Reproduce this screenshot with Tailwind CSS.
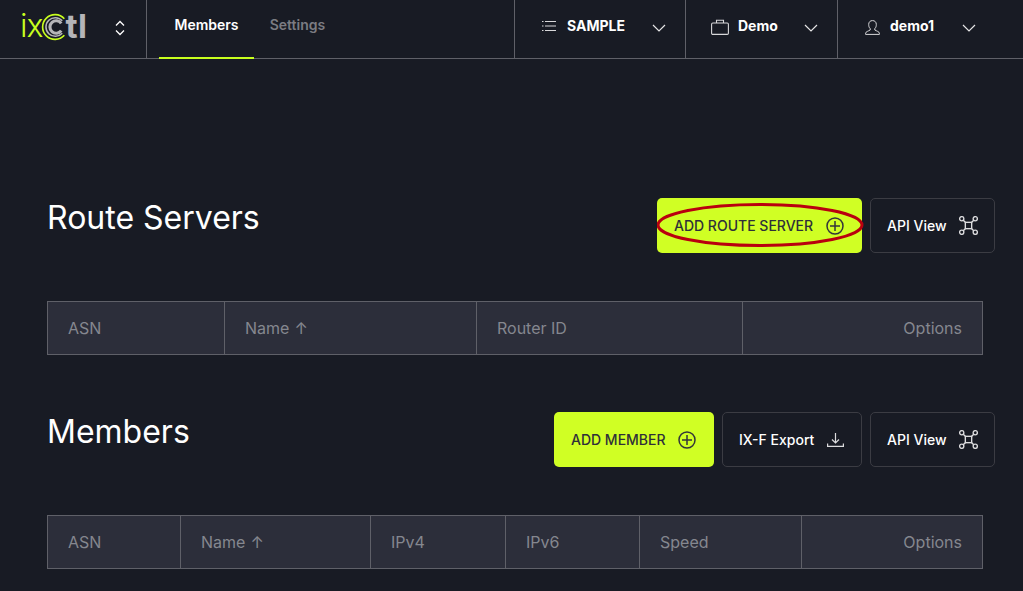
<!DOCTYPE html>
<html>
<head>
<meta charset="utf-8">
<script src="https://cdn.jsdelivr.net/npm/@tailwindcss/browser@4"></script>
</head>
<body class="bg-[#181b24] font-['Inter',sans-serif] text-white w-[1023px] h-[591px] overflow-hidden">
<header class="flex h-[59px] border-b border-[#5f6068]">
  <div class="w-[147px] shrink-0 border-r border-[#5f6068] flex items-center pl-[20px] relative">
    <span class="text-[32px] leading-none font-light text-[#c8ff1e] tracking-[-1px] -mt-[6px]">ix</span>
    <svg class="w-[28px] h-[28px] -ml-[1px] -mt-[5px]" viewBox="0 0 27 27" fill="none">
      <path d="M22.500 5.500A12 12 0 1 0 22.500 21.500" stroke="#c8ff1e" stroke-width="1.600"/>
      <path d="M20.500 7.500A9 9 0 1 0 20.500 19.500" stroke="#b5b5b8" stroke-width="1.500"/>
      <path d="M19.500 10A6 6 0 1 0 19.500 17" stroke="#b5b5b8" stroke-width="3"/>
    </svg>
    <span class="text-[33px] leading-none font-bold text-[#b5b5b8] tracking-[0.5px] -mt-[6px] -ml-[4px]">tl</span>
    <svg class="w-[12px] h-[18px] ml-[26px] -mt-[3px]" viewBox="0 0 12 18" fill="none" stroke="#fff" stroke-width="1.300"><path d="M2 6.500 6 2.500l4 4M2 11.500l4 4 4-4"/></svg>
  </div>
  <nav class="flex flex-1 pl-[12px] text-sm font-semibold">
    <a class="w-[95px] h-[59px] flex items-center justify-center pb-[8px] border-b-2 border-[#c8ff1e] text-white">Members</a>
    <a class="w-[87px] h-[58px] flex items-center justify-center pb-[8px] text-[#7b7c82]">Settings</a>
  </nav>
  <div class="w-[171px] shrink-0 border-l border-[#5f6068] flex items-center pl-[27px] pb-[6px] text-sm font-bold">
    <svg class="w-[14px] h-[12px] mr-[11px]" viewBox="0 0 14 12" fill="none" stroke="#d8d8da" stroke-width="1"><path d="M3 1.500h11M3 6h11M3 10.500h11M0 1.500h1.500M0 6h1.500M0 10.500h1.500"/></svg>
    <span class="w-[85px]">SAMPLE</span>
    <svg class="w-[14px] h-[8px] mt-[3px]" viewBox="0 0 14 8" fill="none" stroke="#e5e5e6" stroke-width="1.200"><path d="M1 1l6 6 6-6"/></svg>
  </div>
  <div class="w-[152px] shrink-0 border-l border-[#5f6068] flex items-center pl-[25px] pb-[6px] text-sm font-bold">
    <svg class="w-[18px] h-[16px] mr-[9px] mt-[2px]" viewBox="0 0 18 16" fill="none" stroke="#d8d8da" stroke-width="1.100"><rect x=".6" y="4" width="16.800" height="11.400" rx="1.200"/><path d="M5.500 4V1.200h7V4"/></svg>
    <span class="w-[66px]">Demo</span>
    <svg class="w-[14px] h-[8px] mt-[3px]" viewBox="0 0 14 8" fill="none" stroke="#e5e5e6" stroke-width="1.200"><path d="M1 1l6 6 6-6"/></svg>
  </div>
  <div class="w-[186px] shrink-0 border-l border-[#5f6068] flex items-center pl-[27px] pb-[6px] text-sm font-bold">
    <svg class="w-[15px] h-[15px] mr-[10px] mt-[2px]" viewBox="0 0 15 15" fill="none" stroke="#d8d8da" stroke-width="1"><path d="M.6 14.400v-1.200c0-1.500 3-2.200 4.600-3.200V8.600C4 7.600 3.700 6 3.700 4.400 3.700 2 5.200.6 7.500.6s3.800 1.400 3.800 3.800c0 1.600-.3 3.200-1.500 4.200V10c1.600 1 4.600 1.700 4.600 3.200v1.200z"/></svg>
    <span class="w-[72px]">demo1</span>
    <svg class="w-[14px] h-[8px] mt-[3px]" viewBox="0 0 14 8" fill="none" stroke="#e5e5e6" stroke-width="1.200"><path d="M1 1l6 6 6-6"/></svg>
  </div>
</header>

<main class="pl-[47px] pr-[40px] pt-[139px]">
  <section>
    <div class="flex items-start justify-between -mr-[12px]">
      <h2 class="text-[32px] leading-[40px]">Route Servers</h2>
      <div class="flex gap-2">
        <div class="relative">
          <button class="h-[55px] w-[205px] rounded-[5px] bg-[#d0ff24] text-[#2f3039] text-sm font-medium flex items-center pl-[17px]">
            ADD ROUTE SERVER
            <svg class="w-[18px] h-[18px] ml-[13px]" viewBox="0 0 18 18" fill="none" stroke="#33363a" stroke-width="1.500"><circle cx="9" cy="9" r="8"/><path d="M9 4v10M4 9h10"/></svg>
          </button>
          <svg class="absolute left-0 top-[5px] w-[207px] h-[44px]" viewBox="0 0 207 44" fill="none"><ellipse cx="103" cy="22" rx="102" ry="20.500" stroke="#b9000f" stroke-width="3"/></svg>
        </div>
        <button class="h-[55px] w-[125px] rounded-[5px] border border-[#3b3c43] text-sm font-medium flex items-center pl-[16px]">
          API View
          <svg class="w-[19px] h-[19px] ml-[12px]" viewBox="0 0 18 18" fill="none" stroke="#dcdcde" stroke-width="1.300"><rect x="6" y="6" width="6" height="6"/><circle cx="2.600" cy="2.600" r="2"/><circle cx="15.400" cy="2.600" r="2"/><circle cx="2.600" cy="15.400" r="2"/><circle cx="15.400" cy="15.400" r="2"/><path d="M4 4l2 2M14 4l-2 2M4 14l2-2M14 14l-2-2"/></svg>
        </button>
      </div>
    </div>
    <div class="mt-[48px] flex h-[54px] border border-[#5f6068] bg-[#2c2e3a] text-base text-[#85878f]">
      <div class="w-[176px] flex items-center pl-[20px]">ASN</div>
      <div class="w-[252px] flex items-center pl-[20px] border-l border-[#5f6068]">Name<span class="ml-[5px]">↑</span></div>
      <div class="w-[266px] flex items-center pl-[20px] border-l border-[#5f6068]">Router ID</div>
      <div class="flex-1 flex items-center justify-end pr-[20px] border-l border-[#5f6068]">Options</div>
    </div>
  </section>

  <section class="mt-[57px]">
    <div class="flex items-start justify-between -mr-[12px]">
      <h2 class="text-[32px] leading-[40px]">Members</h2>
      <div class="flex gap-2">
        <button class="h-[55px] w-[160px] rounded-[5px] bg-[#d0ff24] text-[#2f3039] text-sm font-medium flex items-center pl-[17px]">
          ADD MEMBER
          <svg class="w-[18px] h-[18px] ml-[12px]" viewBox="0 0 18 18" fill="none" stroke="#33363a" stroke-width="1.500"><circle cx="9" cy="9" r="8"/><path d="M9 4v10M4 9h10"/></svg>
        </button>
        <button class="h-[55px] w-[140px] rounded-[5px] border border-[#3b3c43] text-sm font-medium flex items-center pl-[16px]">
          IX-F Export
          <svg class="w-[17px] h-[14px] ml-[13px]" viewBox="0 0 17 14" fill="none" stroke="#dcdcde" stroke-width="1.200"><path d="M8.500 0v9.500M5 6.500l3.500 3.500 3.500-3.500M.6 10.500v2.900h15.800v-2.900"/></svg>
        </button>
        <button class="h-[55px] w-[125px] rounded-[5px] border border-[#3b3c43] text-sm font-medium flex items-center pl-[16px]">
          API View
          <svg class="w-[19px] h-[19px] ml-[12px]" viewBox="0 0 18 18" fill="none" stroke="#dcdcde" stroke-width="1.300"><rect x="6" y="6" width="6" height="6"/><circle cx="2.600" cy="2.600" r="2"/><circle cx="15.400" cy="2.600" r="2"/><circle cx="2.600" cy="15.400" r="2"/><circle cx="15.400" cy="15.400" r="2"/><path d="M4 4l2 2M14 4l-2 2M4 14l2-2M14 14l-2-2"/></svg>
        </button>
      </div>
    </div>
    <div class="mt-[48px] flex h-[54px] border border-[#5f6068] bg-[#2c2e3a] text-base text-[#85878f]">
      <div class="w-[132px] flex items-center pl-[20px]">ASN</div>
      <div class="w-[190px] flex items-center pl-[20px] border-l border-[#5f6068]">Name<span class="ml-[5px]">↑</span></div>
      <div class="w-[135px] flex items-center pl-[20px] border-l border-[#5f6068]">IPv4</div>
      <div class="w-[134px] flex items-center pl-[20px] border-l border-[#5f6068]">IPv6</div>
      <div class="w-[162px] flex items-center pl-[20px] border-l border-[#5f6068]">Speed</div>
      <div class="flex-1 flex items-center justify-end pr-[20px] border-l border-[#5f6068]">Options</div>
    </div>
  </section>
</main>
</body>
</html>
